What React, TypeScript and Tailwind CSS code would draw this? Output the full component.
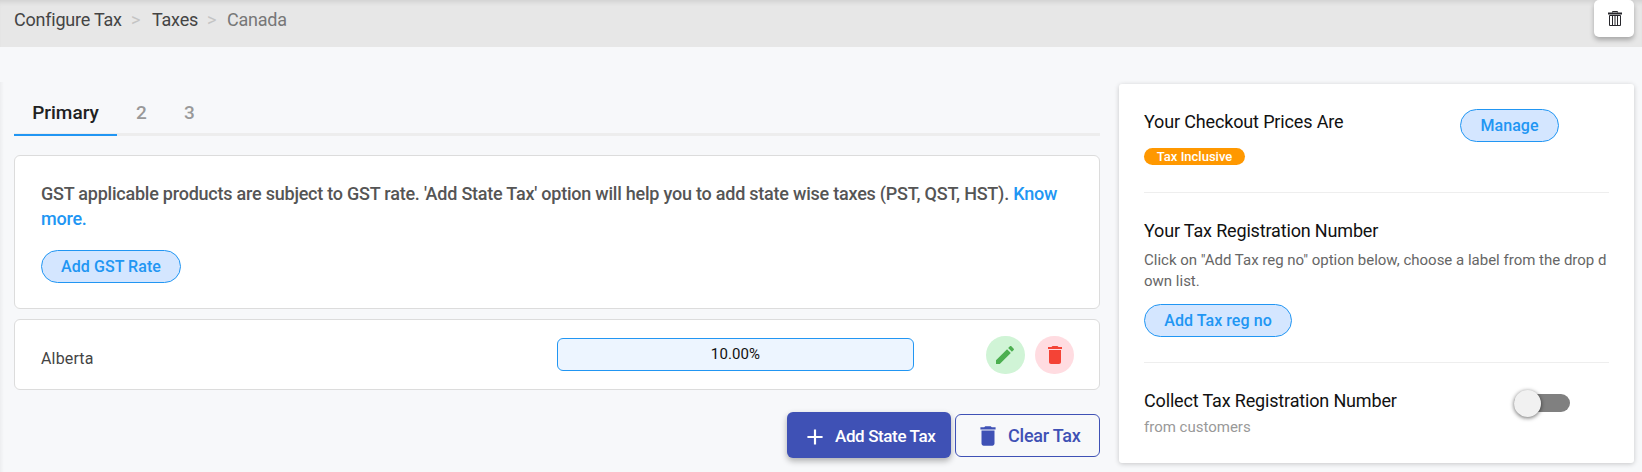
import React, { useState } from 'react';

const DELETE_PATH = 'M6 19c0 1.1.9 2 2 2h8c1.1 0 2-.9 2-2V7H6v12zM19 4h-3.5l-1-1h-5l-1 1H5v2h14V4z';
const EDIT_PATH = 'M3 17.25V21h3.75L17.81 9.94l-3.75-3.75L3 17.25zM20.71 7.04c.39-.39.39-1.02 0-1.41l-2.34-2.34c-.39-.39-1.02-.39-1.41 0l-1.83 1.83 3.75 3.75 1.83-1.83z';
const ADD_PATH = 'M19 13h-6v6h-2v-6H5v-2h6V5h2v6h6v2z';

interface IconProps {
  path: string;
  size?: number;
  className?: string;
}

const Icon: React.FC<IconProps> = ({ path, size = 24, className }) => (
  <svg width={size} height={size} viewBox="0 0 24 24" fill="currentColor" className={className}>
    <path d={path} />
  </svg>
);

const TrashIcon = () => (
  <svg width="14" height="17" viewBox="0 0 14 17" fill="none" stroke="#26262b" className="ml-px">
    <path d="M4.5 2.5v-1h5v1" />
    <path d="M0 3.5h14" strokeWidth="2" />
    <path d="M1.5 5.5v10h11v-10z" />
    <path d="M4.5 5v11M7 5v11M9.5 5v11" />
  </svg>
);

interface PillButtonProps {
  className?: string;
  children: React.ReactNode;
}

const PillButton: React.FC<PillButtonProps> = ({ className = '', children }) => (
  <button
    className={`h-[33px] rounded-full border border-[#2196f3] bg-[#d4e6ff] text-base leading-none font-medium tracking-[0.06px] text-[#2196f3] ${className}`}
  >
    {children}
  </button>
);

const Header = () => (
  <header className="flex h-[47px] items-start justify-between bg-[#e7e7e7] pr-2 pl-3.5 shadow-[inset_0_5px_5px_-3px_rgba(0,0,0,0.1)]">
    <nav className="flex pt-[7px] text-[18px] leading-[26px] tracking-[-0.22px] text-[#444]">
      <span className="w-[117px]">Configure Tax</span>
      <span className="w-[21px] text-[#c4c4c4]">&gt;</span>
      <span className="w-[55px]">Taxes</span>
      <span className="w-5 text-[#c4c4c4]">&gt;</span>
      <span className="text-[#777]">Canada</span>
    </nav>
    <button
      title="Delete"
      className="flex h-[37px] w-10 items-center justify-center rounded-[5px] bg-white shadow-[0_3px_5px_rgba(0,0,0,0.28)]"
    >
      <TrashIcon />
    </button>
  </header>
);

const tabs = [
  { id: 'primary', label: 'Primary', className: 'w-[103px]' },
  { id: '2', label: '2', className: 'w-[49px]' },
  { id: '3', label: '3', className: 'w-[47px]' },
];

const Tabs = () => {
  const [active, setActive] = useState('primary');

  return (
    <div className="flex h-[54px] shadow-[inset_0_-3px_0_#ededed]">
      {tabs.map((tab) => (
        <button
          key={tab.id}
          onClick={() => setActive(tab.id)}
          className={`h-[54px] border-b-2 pt-[11px] text-[19px] font-medium ${tab.className} ${
            active === tab.id ? 'border-[#2196f3] text-[#212121]' : 'border-transparent text-[#999]'
          }`}
        >
          {tab.label}
        </button>
      ))}
    </div>
  );
};

const StateTaxRow: React.FC<{ name: string; rate: string }> = ({ name, rate }) => (
  <div className="mt-2.5 flex h-[71px] rounded-md border border-[#dcdcdc] bg-white pl-[26px]">
    <div className="w-[516px] pt-[27px] text-base leading-6 tracking-[0.15px] text-[#444]">{name}</div>
    <div className="mt-[18px] h-[33px] w-[357px] rounded-md border border-[#2196f3] bg-[#edf5ff] text-center text-[15px] leading-[30px] tracking-[0.1px] text-[#111]">
      {rate}
    </div>
    <div className="mt-4 ml-[72px] flex gap-2.5">
      <button title="Edit" className="flex h-[38px] w-[39px] items-center justify-center rounded-full bg-[#d0f4d6] text-[#4caf50]">
        <Icon path={EDIT_PATH} className="-mt-px mr-px" />
      </button>
      <button title="Delete" className="flex h-[38px] w-[39px] items-center justify-center rounded-full bg-[#ffdce1] text-[#f44336]">
        <Icon path={DELETE_PATH} className="-mt-px" />
      </button>
    </div>
  </div>
);

const TaxPanel = () => (
  <main className="ml-3.5 w-[1086px] pt-[35px]">
    <Tabs />
    <section className="mt-[19px] h-[154px] rounded-md border border-[#dcdcdc] bg-white pt-[25px] pl-[26px]">
      <p className="text-[18px] leading-[25px] font-medium tracking-[-0.225px] text-[#555]">
        GST applicable products are subject to GST rate. 'Add State Tax' option will help you to add state wise taxes (PST, QST, HST).{' '}
        <a className="text-[#2196f3]">Know<br />more.</a>
      </p>
      <PillButton className="mt-[19px] w-[140px]">Add GST Rate</PillButton>
    </section>
    <StateTaxRow name="Alberta" rate="10.00%" />
    <div className="mt-[22px] flex items-center justify-end gap-1">
      <button className="flex h-[46px] w-[164px] items-center rounded-md bg-[#3f51b5] pl-[15px] text-[17px] font-medium tracking-[-0.38px] text-white shadow-[0_3px_6px_rgba(0,0,0,0.3)]">
        <Icon path={ADD_PATH} size={26} className="mt-[3px] mr-[7px]" />
        <span className="mt-[3px]">Add State Tax</span>
      </button>
      <button className="flex h-[43px] w-[145px] items-center rounded-md border border-[#3f51b5] pl-[19px] text-[18px] font-medium tracking-[-0.23px] text-[#3f51b5]">
        <Icon path={DELETE_PATH} size={26} className="mt-0.5 mr-[7px]" />
        Clear Tax
      </button>
    </div>
  </main>
);

const SettingsPanel = () => {
  const [collect, setCollect] = useState(false);

  return (
    <aside className="mt-[37px] ml-[19px] h-[379px] w-[515px] rounded-[3px] bg-white px-[25px] shadow-[0_1px_5px_rgba(0,0,0,0.2)]">
      <div className="flex h-[109px] justify-between border-b border-[#eee] pt-[25px] pr-[50px]">
        <div>
          <h2 className="text-[18px] leading-[26px] tracking-[-0.15px] text-[#111]">Your Checkout Prices Are</h2>
          <span className="mt-[13px] flex h-[17px] w-[101px] items-center justify-center rounded-full bg-[#ff9800] text-[13px] font-medium text-white">
            Tax Inclusive
          </span>
        </div>
        <PillButton className="w-[99px]">Manage</PillButton>
      </div>
      <div className="h-[170px] border-b border-[#eee] pt-[25px]">
        <h2 className="text-[18px] leading-[26px] tracking-[-0.16px] text-[#111]">Your Tax Registration Number</h2>
        <p className="mt-1.5 text-[15px] leading-[21px] break-all text-[#666]">
          Click on "Add Tax reg no" option below, choose a label from the drop down list.
        </p>
        <PillButton className="mt-3 w-[148px]">Add Tax reg no</PillButton>
      </div>
      <div className="flex justify-between pt-[25px] pr-[39px]">
        <div>
          <h2 className="text-[18px] leading-[26px] tracking-[-0.16px] text-[#111]">Collect Tax Registration Number</h2>
          <p className="mt-[3px] text-[15px] leading-[21px] text-[#999]">from customers</p>
        </div>
        <button
          role="switch"
          aria-checked={collect}
          onClick={() => setCollect(!collect)}
          className={`mt-1.5 flex h-[18px] w-14 items-center rounded-full bg-[#808080] ${collect ? 'justify-end' : ''}`}
        >
          <span className="h-[27px] w-[27px] rounded-full bg-[#f1f1f1] shadow-[0_1px_4px_rgba(0,0,0,0.6)]" />
        </button>
      </div>
    </aside>
  );
};

export default function App() {
  return (
    <div className="h-[472px] w-[1642px] overflow-hidden bg-[#f7f8fa] font-['Roboto',sans-serif]">
      <Header />
      <div className="flex">
        {/* soft edge of the side navigation */}
        <div className="mt-[35px] -mr-1 h-[390px] w-1 bg-linear-to-r from-black/4 to-transparent" />
        <TaxPanel />
        <SettingsPanel />
      </div>
    </div>
  );
}
